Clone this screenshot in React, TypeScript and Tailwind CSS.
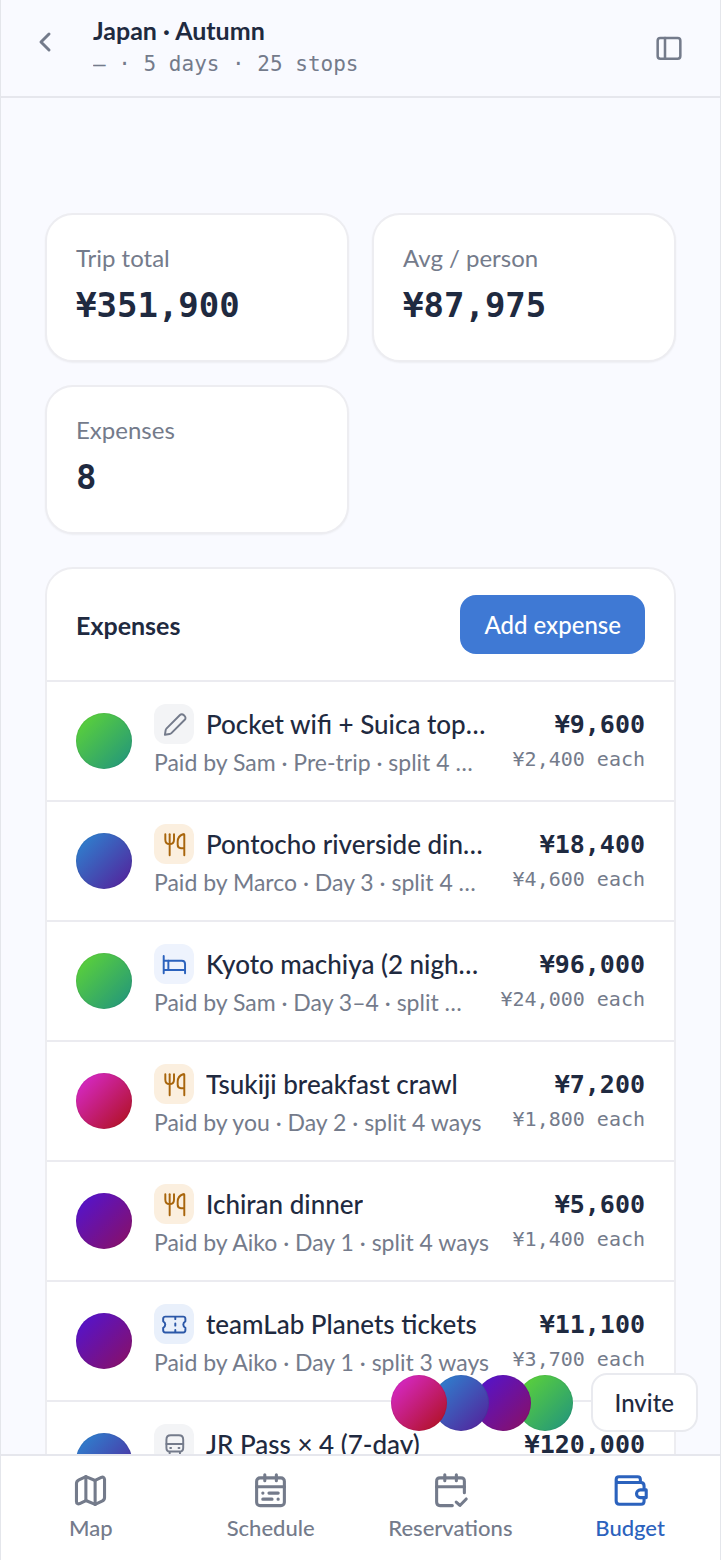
import type { ReactNode } from 'react';
import { clsx } from 'clsx';

type Person = 'you' | 'marco' | 'aiko' | 'sam';
type Category = 'other' | 'food' | 'stay' | 'ticket' | 'transit';

const avatarColors: Record<Person, string> = {
  you: 'from-[#d92bd8] to-[#ae1016]',
  marco: 'from-[#2b8ad3] to-[#561c98]',
  aiko: 'from-[#4f14d6] to-[#8c1060]',
  sam: 'from-[#61d733] to-[#1f9280]',
};

const categoryColors: Record<Category, string> = {
  other: 'bg-[#f3f4f6] text-[#747b8b]',
  food: 'bg-[#fbefdf] text-[#a8650c]',
  stay: 'bg-[#eef3fd] text-[#2b62bd]',
  ticket: 'bg-[#e9f0fb] text-[#2c58a8]',
  transit: 'bg-[#f3f4f6] text-[#747b8b]',
};

const stats = [
  { label: 'Trip total', value: '¥351,900' },
  { label: 'Avg / person', value: '¥87,975' },
  { label: 'Expenses', value: '8' },
];

const expenses: {
  title: string;
  note: string;
  amount: string;
  each: string;
  payer: Person;
  category: Category;
}[] = [
  { title: 'Pocket wifi + Suica top…', note: 'Paid by Sam · Pre-trip · split 4 …', amount: '¥9,600', each: '¥2,400 each', payer: 'sam', category: 'other' },
  { title: 'Pontocho riverside din…', note: 'Paid by Marco · Day 3 · split 4 …', amount: '¥18,400', each: '¥4,600 each', payer: 'marco', category: 'food' },
  { title: 'Kyoto machiya (2 nigh…', note: 'Paid by Sam · Day 3–4 · split …', amount: '¥96,000', each: '¥24,000 each', payer: 'sam', category: 'stay' },
  { title: 'Tsukiji breakfast crawl', note: 'Paid by you · Day 2 · split 4 ways', amount: '¥7,200', each: '¥1,800 each', payer: 'you', category: 'food' },
  { title: 'Ichiran dinner', note: 'Paid by Aiko · Day 1 · split 4 ways', amount: '¥5,600', each: '¥1,400 each', payer: 'aiko', category: 'food' },
  { title: 'teamLab Planets tickets', note: 'Paid by Aiko · Day 1 · split 3 ways', amount: '¥11,100', each: '¥3,700 each', payer: 'aiko', category: 'ticket' },
  { title: 'JR Pass × 4 (7-day)', note: 'Paid by Marco · split 4 ways', amount: '¥120,000', each: '¥30,000 each', payer: 'marco', category: 'transit' },
];

const members: { id: Person; layer: string }[] = [
  { id: 'you', layer: 'z-40' },
  { id: 'marco', layer: 'z-30' },
  { id: 'aiko', layer: 'z-20' },
  { id: 'sam', layer: 'z-10' },
];

function Icon({ className, stroke = 1.8, children }: { className: string; stroke?: number; children: ReactNode }) {
  return (
    <svg
      viewBox="0 0 24 24"
      className={className}
      fill="none"
      stroke="currentColor"
      strokeWidth={stroke}
      strokeLinecap="round"
      strokeLinejoin="round"
      aria-hidden="true"
    >
      {children}
    </svg>
  );
}

const categoryIcons: Record<Category, ReactNode> = {
  other: <path d="M17.500 3.700 5.200 16c-.5.500-.8 1-.9 1.700l-.7 4.300 4.300-.7c.7-.1 1.200-.4 1.700-.9L21.900 8.100a2.400 2.400 0 0 0 0-3.400l-1-1a2.400 2.400 0 0 0-3.400 0Z" />,
  food: (
    <>
      <path d="M4 3v5c0 2.500 1.600 4 4 4s4-1.500 4-4V3" />
      <path d="M8 3v19.300" />
      <path d="M21.500 22.300V3.500c0-.6-.5-.8-1.100-.5-2.900 1-5 3.300-5 6.800v3c0 2 1 3.100 3 3.100h3.100" />
    </>
  ),
  stay: (
    <>
      <path d="M2.500 4.500v16M2.500 17.500h19.700M2.500 9h16.700c1.900 0 3 1.100 3 3v8.500" />
      <path d="M6.800 9v8.500" />
    </>
  ),
  ticket: (
    <>
      <path d="M2 9.500a3.300 3.300 0 0 1 0 6v2.300a2 2 0 0 0 2 2h16.500a2 2 0 0 0 2-2v-2.300a3.300 3.300 0 0 1 0-6V7.200a2 2 0 0 0-2-2H4a2 2 0 0 0-2 2Z" />
      <path d="M13.200 5.500v2M13.200 11.500v2M13.200 17.500v2" />
    </>
  ),
  transit: (
    <>
      <path d="M9 4h7.500c2.700 0 4 1.300 4 4v7.500c0 2.300-.8 3.500-3 3.500H8c-2.200 0-3-1.200-3-3.500V8c0-2.700 1.300-4 4-4Z" />
      <path d="M5 12h15.500M8.500 15.600h.8M16.200 15.600h.8M8 19.300v1.500M17.500 19.300v1.500" />
    </>
  ),
};

const navItems = [
  {
    label: 'Map',
    icon: (
      <>
        <path d="M9 3 4.500 5.100c-1.100.5-1.600 1.200-1.600 2.400v11.600c0 1.300.9 1.900 2.100 1.400L9 18.500l6 2.500 4.500-2.100c1.100-.5 1.600-1.200 1.600-2.400V4.900c0-1.300-.9-1.900-2.100-1.400L15 5.500 9 3Z" />
        <path d="M9 3v15.500M15 5.500V21" />
      </>
    ),
  },
  {
    label: 'Schedule',
    icon: (
      <>
        <rect x="3" y="3.800" width="18" height="18" rx="2.200" />
        <path d="M8.300 1.800v3.900M15.800 1.800v3.900M3 9.600h18M7 13.700h.1M11 13.700h6M7 17.600h6M16.900 17.600h.1" />
      </>
    ),
  },
  {
    label: 'Reservations',
    icon: (
      <>
        <path d="M21 13.500V6c0-1.500-.7-2.200-2.200-2.200H5.200C3.700 3.800 3 4.500 3 6v13.500c0 1.500.7 2.300 2.200 2.300h8" />
        <path d="M8.300 1.800v3.900M15.800 1.800v3.900M3 9.600h18M15.700 19.500l2.400 2.200 4.100-4.200" />
      </>
    ),
  },
  {
    label: 'Budget',
    icon: (
      <>
        <path d="M2.700 5v13.800c0 1.400.7 2.100 2.100 2.100h14c1.300 0 2-.7 2-2v-1.800M20.800 11V9c0-1.400-.7-2.200-2.100-2.200H4.500c-1.200 0-1.800-.7-1.800-1.800s.7-1.900 1.900-1.900h12c1.200 0 1.800.6 1.800 1.800v1.900" />
        <path d="M22.200 11.600h-3.800a2.500 2.500 0 0 0 0 5h3.800Z" />
      </>
    ),
  },
];

function Avatar({ person, className }: { person: Person; className?: string }) {
  return (
    <span
      className={clsx('block size-14 shrink-0 rounded-full bg-linear-135/srgb inset-ring-1 inset-ring-black/5', avatarColors[person], className)}
    />
  );
}

export default function App() {
  return (
    <div className="relative flex h-screen flex-col overflow-hidden border-x border-[#e4e6eb] bg-[#f9faff] font-[Lato,'Noto_Sans',sans-serif] text-[#1f2a40]">
      <header className="flex shrink-0 items-center border-b-2 border-[#e6e7ed] pt-3 pr-[35px] pb-4 pl-8">
        <button type="button" aria-label="Back" className="-mt-2 mr-9 text-[#747b8b]">
          <svg viewBox="0 0 24 24" className="size-6" fill="none" stroke="currentColor" strokeWidth="3" strokeLinecap="round" strokeLinejoin="round">
            <path d="m16 4-8 8 8 8" />
          </svg>
        </button>
        <div className="min-w-0 flex-1">
          <h1 className="text-[25px] leading-9 font-bold">Japan · Autumn</h1>
          <p className="truncate font-['DejaVu_Sans_Mono',monospace] text-[21px] leading-8 text-[#747b8b]">— · 5 days · 25 stops</p>
        </div>
        <button type="button" aria-label="Toggle panel" className="mt-1 text-[#747b8b]">
          <Icon className="size-8" stroke={1.9}>
            <rect x="3.500" y="4.500" width="17" height="15.500" rx="2" />
            <path d="M9 4.500V20" />
          </Icon>
        </button>
      </header>

      <main className="min-h-0 flex-1 overflow-hidden px-11 pt-[115px]">
        <div className="grid grid-cols-2 gap-[23px]">
          {stats.map((stat) => (
            <div key={stat.label} className="rounded-[28px] border-2 border-[#ededf1] bg-white px-[29px] pt-[27px] pb-[34px] shadow-xs">
              <p className="text-[24px] leading-8 text-[#747b8b]">{stat.label}</p>
              <p className="mt-2.5 font-['DejaVu_Sans_Mono',monospace] text-[34px] leading-[42px] font-bold">{stat.value}</p>
            </div>
          ))}
        </div>

        <section className="mt-[33px] rounded-[28px] border-2 border-[#ededf1] bg-white">
          <div className="flex items-center justify-between px-[29px] py-[26px]">
            <h2 className="text-[25px] leading-8 font-bold">Expenses</h2>
            <button type="button" className="h-[59px] rounded-2xl bg-[#3f79d4] px-6 text-[24px] font-medium text-white">
              Add expense
            </button>
          </div>
          <ul>
            {expenses.map((expense) => (
              <li key={expense.title} className="flex h-[120px] items-center gap-[22px] border-t-2 border-[#ebebf0] px-[29px]">
                <Avatar person={expense.payer} />
                <div className="min-w-0 flex-1 pt-0.5">
                  <div className="flex items-center gap-3">
                    <span className={clsx('flex size-10 shrink-0 items-center justify-center rounded-xl', categoryColors[expense.category])}>
                      <Icon className="size-[26px]">{categoryIcons[expense.category]}</Icon>
                    </span>
                    <span className="truncate text-[26px] leading-10 font-medium">{expense.title}</span>
                  </div>
                  <p className="truncate text-[23px] leading-9 text-[#747b8b]">{expense.note}</p>
                </div>
                <div className="shrink-0 text-right font-['DejaVu_Sans_Mono',monospace]">
                  <p className="text-[25px] leading-9 font-bold">{expense.amount}</p>
                  <p className="text-[20px] leading-8 text-[#747b8b]">{expense.each}</p>
                </div>
              </li>
            ))}
          </ul>
        </section>
      </main>

      <div className="absolute right-[22px] bottom-32 z-10 flex items-center">
        <div className="flex items-center">
          {members.map((member) => (
            <Avatar key={member.id} person={member.id} className={clsx('relative -ml-3.5', member.layer)} />
          ))}
        </div>
        <button type="button" className="ml-[18px] h-[59px] rounded-2xl border-2 border-[#e9eaef] bg-white px-[22px] text-[24px] font-medium">
          Invite
        </button>
      </div>

      <nav className="grid h-[106px] shrink-0 grid-cols-4 border-t-2 border-[#e6e7ed] bg-white">
        {navItems.map((item) => (
          <a
            key={item.label}
            href="#"
            className={clsx(
              'flex flex-col items-center gap-[3px] pt-4 text-[22px] leading-8 font-medium',
              item.label === 'Budget' ? 'text-[#2b62bd]' : 'text-[#747b8b]',
            )}
          >
            <Icon className="size-[37px]" stroke={2}>
              {item.icon}
            </Icon>
            {item.label}
          </a>
        ))}
      </nav>
    </div>
  );
}
